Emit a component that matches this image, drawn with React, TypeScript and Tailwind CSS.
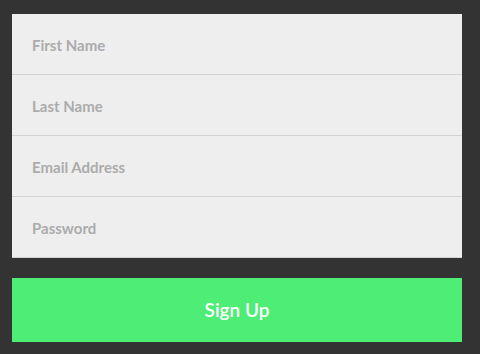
export default function App() {
  const fields = [
    { name: "first", placeholder: "First Name", type: "text" },
    { name: "last", placeholder: "Last Name", type: "text" },
    { name: "email", placeholder: "Email Address", type: "email" },
    { name: "password", placeholder: "Password", type: "password" },
  ];

  return (
    <div className="min-h-[354px] w-full bg-[#333333] pl-3 pr-[18px] pt-[14px] font-['Lato',sans-serif]">
      <form className="flex flex-col" onSubmit={(e) => e.preventDefault()}>
        <div className="flex flex-col bg-[#eeeeee]">
          {fields.map((f) => (
            <input
              key={f.name}
              name={f.name}
              type={f.type}
              placeholder={f.placeholder}
              className="h-[61px] w-full border-b border-[#d2d2d2] bg-[#eeeeee] px-5 pt-0.5 text-[15px] font-bold text-[#555] outline-none placeholder:text-[#ababab]"
            />
          ))}
        </div>
        <button
          type="submit"
          className="mt-5 h-16 w-full bg-[#4ded76] text-[19px] font-semibold text-white"
        >
          Sign Up
        </button>
      </form>
    </div>
  );
}
